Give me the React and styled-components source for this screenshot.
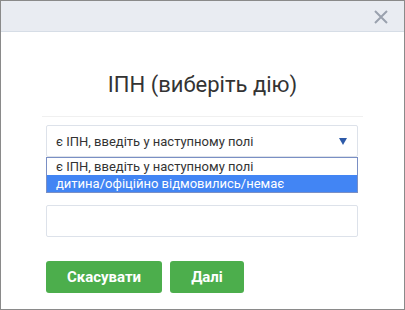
import styled, { createGlobalStyle } from "styled-components";

const GlobalStyle = createGlobalStyle`
  html, body {
    margin: 0;
    padding: 0;
    background: #fff;
    font-family: Roboto, "Liberation Sans", Arial, sans-serif;
  }
`;

const Dialog = styled.div`
  box-sizing: border-box;
  width: 405px;
  height: 310px;
  border: 1px solid #8a8a8a;
  background: #fff;
  display: flex;
  flex-direction: column;
`;

const Header = styled.div`
  height: 30px;
  background: #e9ecf2;
  border-bottom: 1px solid #d6dde6;
  display: flex;
  justify-content: flex-end;
  align-items: center;
  padding-right: 16px;
`;

const CloseBtn = styled.button`
  border: none;
  background: none;
  padding: 0;
  width: 14px;
  height: 14px;
  cursor: pointer;
  display: flex;
  margin-top: 1px;
`;

const Body = styled.div`
  padding: 0 41px;
  display: flex;
  flex-direction: column;
`;

const Title = styled.h2`
  margin: 39px 0 0;
  font-size: 22px;
  line-height: 27px;
  font-weight: 400;
  color: #333;
  text-align: center;
`;

const Divider = styled.div`
  height: 1px;
  background: #f0f0f0;
  margin-top: 18px;
`;

const Form = styled.div`
  padding: 8px 4px 0;
  display: flex;
  flex-direction: column;
`;

const SelectWrap = styled.div`
  position: relative;
  width: 312px;
`;

const SelectBox = styled.div`
  box-sizing: border-box;
  height: 32px;
  border: 1px solid #dde2ea;
  border-radius: 2px;
  display: flex;
  align-items: center;
  justify-content: space-between;
  padding: 0 10px 0 9px;
  font-size: 13px;
  color: #333;
`;

const Arrow = styled.span`
  width: 0;
  height: 0;
  border-left: 4px solid transparent;
  border-right: 4px solid transparent;
  border-top: 7px solid #2d5aa8;
`;

const Options = styled.ul`
  position: absolute;
  top: 32px;
  left: 0;
  right: 0;
  margin: 0;
  padding: 0;
  list-style: none;
  border: 1px solid #7a8fc4;
  background: #fff;
`;

const Option = styled.li`
  height: 17px;
  line-height: 17px;
  padding-left: 9px;
  font-size: 13px;
  color: ${(p) => (p.$active ? "#fff" : "#333")};
  background: ${(p) => (p.$active ? "#4285f4" : "#fff")};
`;

const Input = styled.input`
  box-sizing: border-box;
  width: 312px;
  height: 32px;
  margin-top: 48px;
  border: 1px solid #dde2ea;
  border-radius: 2px;
  outline: none;
`;

const Buttons = styled.div`
  display: flex;
  gap: 8px;
  margin-top: 24px;
`;

const GreenBtn = styled.button`
  height: 32px;
  width: ${(p) => p.$w}px;
  border: none;
  border-radius: 3px;
  background: #4cae4c;
  color: #fff;
  font-family: Roboto, "Liberation Sans", Arial, sans-serif;
  font-size: 15px;
  font-weight: 700;
  cursor: pointer;
  padding: 0;
`;

const App = () => {
  return (
    <>
      <GlobalStyle />
      <Dialog>
        <Header>
          <CloseBtn aria-label="close">
            <svg width="14" height="14" viewBox="0 0 14 14">
              <path
                d="M1 1L13 13M13 1L1 13"
                stroke="#9aa1ae"
                strokeWidth="2"
                fill="none"
              />
            </svg>
          </CloseBtn>
        </Header>
        <Body>
          <Title>ІПН (виберіть дію)</Title>
          <Divider />
          <Form>
            <SelectWrap>
              <SelectBox>
                <span>є ІПН, введіть у наступному полі</span>
                <Arrow />
              </SelectBox>
              <Options>
                <Option>є ІПН, введіть у наступному полі</Option>
                <Option $active>дитина/офіційно відмовились/немає</Option>
              </Options>
            </SelectWrap>
            <Input />
            <Buttons>
              <GreenBtn $w={116}>Скасувати</GreenBtn>
              <GreenBtn $w={74}>Далі</GreenBtn>
            </Buttons>
          </Form>
        </Body>
      </Dialog>
    </>
  );
};

export default App;
